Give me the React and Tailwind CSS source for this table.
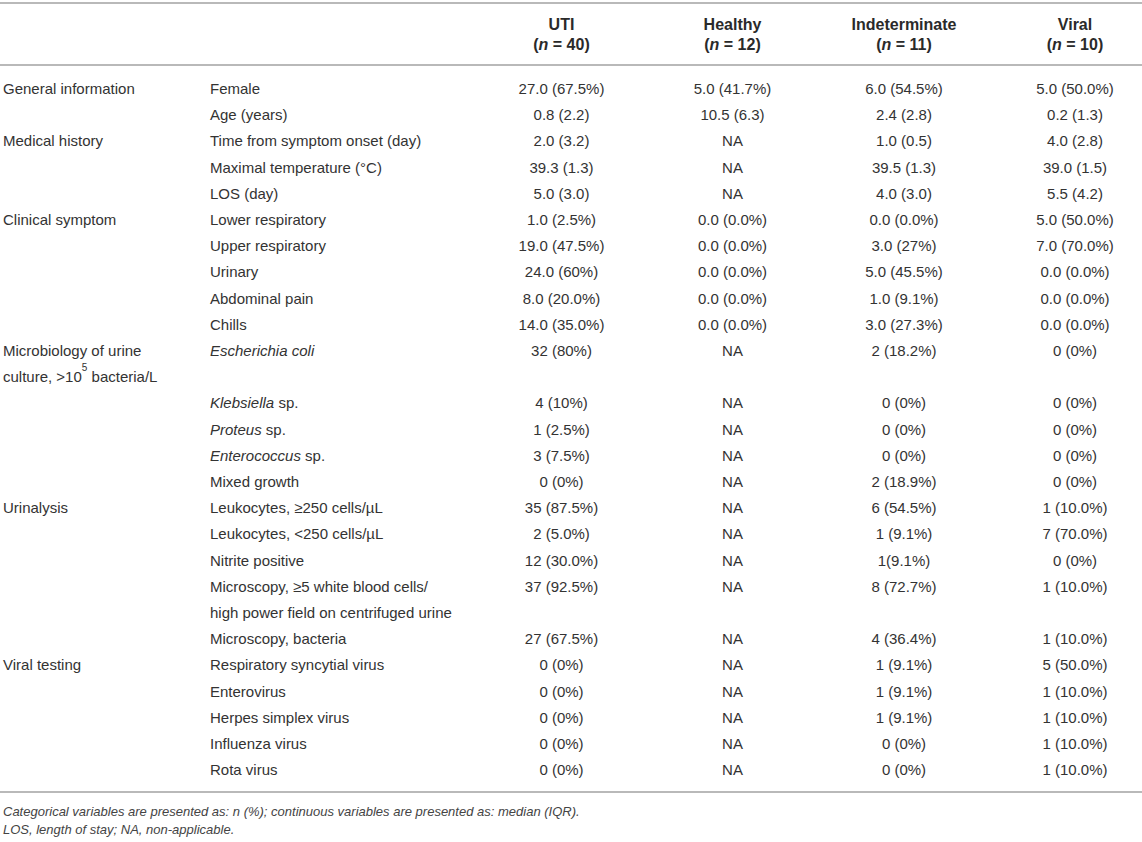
import React from 'react';

const groups = [
  {
    label: 'General information',
    rows: [
      { name: 'Female', v: ['27.0 (67.5%)', '5.0 (41.7%)', '6.0 (54.5%)', '5.0 (50.0%)'] },
      { name: 'Age (years)', v: ['0.8 (2.2)', '10.5 (6.3)', '2.4 (2.8)', '0.2 (1.3)'] },
    ],
  },
  {
    label: 'Medical history',
    rows: [
      { name: 'Time from symptom onset (day)', v: ['2.0 (3.2)', 'NA', '1.0 (0.5)', '4.0 (2.8)'] },
      { name: 'Maximal temperature (°C)', v: ['39.3 (1.3)', 'NA', '39.5 (1.3)', '39.0 (1.5)'] },
      { name: 'LOS (day)', v: ['5.0 (3.0)', 'NA', '4.0 (3.0)', '5.5 (4.2)'] },
    ],
  },
  {
    label: 'Clinical symptom',
    rows: [
      { name: 'Lower respiratory', v: ['1.0 (2.5%)', '0.0 (0.0%)', '0.0 (0.0%)', '5.0 (50.0%)'] },
      { name: 'Upper respiratory', v: ['19.0 (47.5%)', '0.0 (0.0%)', '3.0 (27%)', '7.0 (70.0%)'] },
      { name: 'Urinary', v: ['24.0 (60%)', '0.0 (0.0%)', '5.0 (45.5%)', '0.0 (0.0%)'] },
      { name: 'Abdominal pain', v: ['8.0 (20.0%)', '0.0 (0.0%)', '1.0 (9.1%)', '0.0 (0.0%)'] },
      { name: 'Chills', v: ['14.0 (35.0%)', '0.0 (0.0%)', '3.0 (27.3%)', '0.0 (0.0%)'] },
    ],
  },
  {
    label: (
      <>
        Microbiology of urine
        <br />
        culture, &gt;10<sup className="text-[10px] align-[6px]">5</sup> bacteria/L
      </>
    ),
    rows: [
      { name: <i>Escherichia coli</i>, v: ['32 (80%)', 'NA', '2 (18.2%)', '0 (0%)'], tall: true },
      { name: <><i>Klebsiella</i> sp.</>, v: ['4 (10%)', 'NA', '0 (0%)', '0 (0%)'] },
      { name: <><i>Proteus</i> sp.</>, v: ['1 (2.5%)', 'NA', '0 (0%)', '0 (0%)'] },
      { name: <><i>Enterococcus</i> sp.</>, v: ['3 (7.5%)', 'NA', '0 (0%)', '0 (0%)'] },
      { name: 'Mixed growth', v: ['0 (0%)', 'NA', '2 (18.9%)', '0 (0%)'] },
    ],
  },
  {
    label: 'Urinalysis',
    rows: [
      { name: 'Leukocytes, ≥250 cells/µL', v: ['35 (87.5%)', 'NA', '6 (54.5%)', '1 (10.0%)'] },
      { name: 'Leukocytes, <250 cells/µL', v: ['2 (5.0%)', 'NA', '1 (9.1%)', '7 (70.0%)'] },
      { name: 'Nitrite positive', v: ['12 (30.0%)', 'NA', '1(9.1%)', '0 (0%)'] },
      {
        name: (
          <>
            Microscopy, ≥5 white blood cells/
            <br />
            high power field on centrifuged urine
          </>
        ),
        v: ['37 (92.5%)', 'NA', '8 (72.7%)', '1 (10.0%)'],
      },
      { name: 'Microscopy, bacteria', v: ['27 (67.5%)', 'NA', '4 (36.4%)', '1 (10.0%)'] },
    ],
  },
  {
    label: 'Viral testing',
    rows: [
      { name: 'Respiratory syncytial virus', v: ['0 (0%)', 'NA', '1 (9.1%)', '5 (50.0%)'] },
      { name: 'Enterovirus', v: ['0 (0%)', 'NA', '1 (9.1%)', '1 (10.0%)'] },
      { name: 'Herpes simplex virus', v: ['0 (0%)', 'NA', '1 (9.1%)', '1 (10.0%)'] },
      { name: 'Influenza virus', v: ['0 (0%)', 'NA', '0 (0%)', '1 (10.0%)'] },
      { name: 'Rota virus', v: ['0 (0%)', 'NA', '0 (0%)', '1 (10.0%)'] },
    ],
  },
];

const cols = 'grid grid-cols-[210px_266px_171px_171px_172px_1fr]';

const heads = [
  ['UTI', '40'],
  ['Healthy', '12'],
  ['Indeterminate', '11'],
  ['Viral', '10'],
];

export default function App() {
  return (
    <div className="w-[1142px] min-h-[842px] bg-white pt-[2px] text-[#333] font-['Liberation_Sans',Arial,sans-serif]">
      {/* header */}
      <div className={`${cols} border-t-2 border-b-2 border-[#b9b9b9] pt-[11px] pb-[9px] text-[16px] leading-[20px] font-bold text-[#2a2a2a]`}>
        <div />
        <div />
        {heads.map(([t, n], i) => (
          <div key={t} className={`text-center ${i === 3 ? 'pl-[18px]' : ''}`}>
            <div>{t}</div>
            <div>
              (<i>n</i> = {n})
            </div>
          </div>
        ))}
      </div>

      {/* body */}
      <div className="border-b-2 border-[#b9b9b9] pt-[10px] pb-[8px] text-[15px] leading-[26.2px]">
        {groups.map((g, gi) =>
          g.rows.map((r, ri) => (
            <div key={`${gi}-${ri}`} className={`${cols} ${r.tall ? 'min-h-[52.4px]' : ''}`}>
              <div className="pl-[3px]">{ri === 0 ? g.label : null}</div>
              <div>{r.name}</div>
              {r.v.map((val, vi) => (
                <div key={vi} className={`text-center ${vi === 3 ? 'pl-[18px]' : ''}`}>
                  {val}
                </div>
              ))}
            </div>
          ))
        )}
      </div>

      {/* footnote */}
      <div className="mt-[10px] pl-[3px] text-[13px] leading-[18px] italic text-[#444]">
        <div>Categorical variables are presented as: n (%); continuous variables are presented as: median (IQR).</div>
        <div>LOS, length of stay; NA, non-applicable.</div>
      </div>
    </div>
  );
}
